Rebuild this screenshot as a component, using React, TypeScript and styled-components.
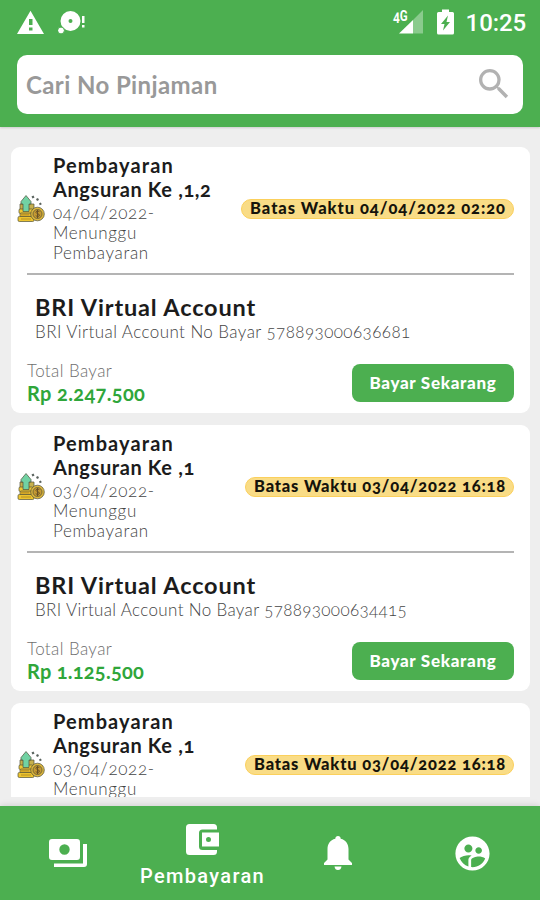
import React from 'react';
import styled, { createGlobalStyle } from 'styled-components';
import { MdSearch, MdSupervisedUserCircle } from 'react-icons/md';

const GREEN = '#4caf50';

const GlobalStyle = createGlobalStyle`
  * { box-sizing: border-box; }
  body {
    margin: 0;
    background: #eeeeee;
    font-family: "Lato", "Open Sans", sans-serif;
    font-variant-numeric: oldstyle-nums;
  }
`;

const Screen = styled.div`
  width: 540px;
  height: 900px;
  display: flex;
  flex-direction: column;
  overflow: hidden;
  background: #eeeeee;
`;

const Header = styled.header`
  height: 127px;
  flex: none;
  background: ${GREEN};
  box-shadow: 0 1px 2px rgba(0, 0, 0, 0.14);
`;

const StatusBar = styled.div`
  height: 55px;
  padding: 0 14px 11px 17px;
  display: flex;
  align-items: center;
  color: #fff;
`;

const DiscIcon = styled.svg`
  margin-left: 14px;
`;

const StatusRight = styled.div`
  margin-left: auto;
  display: flex;
  align-items: center;
`;

const Battery = styled.svg`
  margin: 0 12px 0 14px;
`;

const Clock = styled.span`
  font: 500 24px/28px "Roboto", sans-serif;
  letter-spacing: -0.1px;
  font-variant-numeric: lining-nums;
  margin-top: 2px;
`;

const SearchBox = styled.div`
  height: 59px;
  margin: 0 17px;
  padding: 0 12px 1px 9px;
  display: flex;
  align-items: center;
  justify-content: space-between;
  border-radius: 10px;
  background: #fff;
  color: #999;
  font-size: 24px;
  font-weight: 700;
  letter-spacing: 0.4px;
`;

const SearchIcon = styled(MdSearch)`
  width: 40px;
  height: 40px;
  margin-right: -3px;
  color: #b2b2b2;
`;

const List = styled.main`
  height: 670px;
  flex: none;
  padding: 20px 10px 0 11px;
  display: flex;
  flex-direction: column;
  gap: 12px;
  overflow: hidden;
`;

const Card = styled.section`
  height: 266px;
  flex: none;
  padding: 6px 16px 0;
  border-radius: 9px;
  background: #fff;
`;

const CardTop = styled.div`
  height: 120px;
  margin-left: -10px;
  display: flex;
  align-items: center;
`;

const MoneyArt = styled.svg`
  flex: none;
  margin: 0 8px 9px 0;
`;

const Summary = styled.div`
  width: 170px;
  height: 120px;
`;

const Title = styled.h2`
  margin: 0;
  font-size: 20px;
  line-height: 24px;
  font-weight: 700;
  letter-spacing: 0.6px;
  color: #1c1c1c;
`;

const TitleLead = styled.span`
  display: block;
  letter-spacing: 1.1px;
`;

const Status = styled.div`
  margin-top: 2px;
  width: 120px;
  font-size: 17px;
  line-height: 20px;
  font-weight: 300;
  letter-spacing: 0.65px;
  color: #444;
`;

const Deadline = styled.div<{ $tracking: number }>`
  height: 20px;
  margin: -8px 0 0 auto;
  padding: 0 7px 0 8px;
  border: 1px solid #fbd05c;
  border-radius: 10px;
  background: #f9dc86;
  font-size: 16.5px;
  line-height: 16px;
  font-weight: 900;
  letter-spacing: ${p => p.$tracking}px;
  white-space: nowrap;
  color: #15130b;
`;

const Divider = styled.hr`
  height: 2px;
  margin: 0;
  border: 0;
  background: #b4b4b4;
`;

const Account = styled.div`
  padding: 18px 0 0 8px;
`;

const AccountName = styled.h3`
  margin: 0;
  font-size: 23.5px;
  line-height: 28px;
  font-weight: 700;
  letter-spacing: 0.85px;
  color: #1c1c1c;
`;

const AccountNumber = styled.div<{ $tracking: number }>`
  font-size: 17px;
  line-height: 22px;
  font-weight: 300;
  letter-spacing: ${p => p.$tracking}px;
  white-space: nowrap;
  color: #444;
`;

const PayRow = styled.div`
  margin-top: 21px;
  display: flex;
  justify-content: space-between;
`;

const TotalLabel = styled.div`
  margin-top: -3px;
  font-size: 17px;
  line-height: 20px;
  font-weight: 300;
  letter-spacing: 0.4px;
  color: #6e6e6e;
`;

const Amount = styled.div<{ $tracking: number }>`
  font-size: 20px;
  line-height: 24px;
  font-weight: 700;
  letter-spacing: ${p => p.$tracking}px;
  color: #2fa63a;
`;

const PayButton = styled.button`
  width: 162px;
  height: 38px;
  padding: 0 0 1px;
  border: 0;
  border-radius: 8px;
  background: ${GREEN};
  color: #fff;
  font: 900 17px "Lato", sans-serif;
  letter-spacing: 0.7px;
  white-space: nowrap;
`;

const BottomNav = styled.nav`
  height: 94px;
  margin-top: auto;
  display: grid;
  grid-template-columns: repeat(4, 1fr);
  background: ${GREEN};
  box-shadow: 0 -1px 6px rgba(0, 0, 0, 0.12);
  color: #fff;
`;

const Tab = styled.div`
  display: flex;
  flex-direction: column;
  align-items: center;
  justify-content: center;
`;

const WalletTab = styled(Tab)`
  justify-content: flex-start;
  padding-top: 18px;
`;

const TabLabel = styled.span`
  margin-top: 9px;
  font: 500 20px/24px "Roboto", sans-serif;
  letter-spacing: 1.35px;
`;

function MoneyIcon() {
  return (
    <MoneyArt width="28" height="30" viewBox="0 0 28 30">
      <g stroke="#50513b" strokeWidth="0.7" strokeLinejoin="round">
        <path fill="#c6b04c" d="M3 10h14v6H3z" />
        <rect x="2" y="15" width="14" height="4.5" rx="1.2" fill="#f0c832" />
        <rect x="3" y="19" width="14" height="4" rx="1.2" fill="#e2b52d" />
        <rect x="1" y="22.5" width="16" height="5" rx="1.3" fill="#edc42f" />
        <path fill="#71d2a3" d="M9 1.500L14 7.500v2.500H12v7.500H6V10H4V7.500z" />
        <circle cx="20.500" cy="20" r="6.800" fill="#dcb53c" />
        <circle cx="20.500" cy="20" r="4.500" fill="#c69a32" />
      </g>
      <path d="M22.500 18c-1-1.400-4-1-3.500.6.500 1.500 3.500 1 3.500 2.600 0 1.500-3 1.500-3.800.3M20.500 16v8" fill="none" stroke="#695126" />
      <path d="M4 20.800h8M4 25h10" stroke="#a98520" strokeWidth="0.8" />
      <path d="M14.500 2.500l2-1 1 2-2 1zM19 5l2-1 1 2-2 1zM22 9.500l1.800-1 1 1.800-2 1z" fill="#59625d" />
    </MoneyArt>
  );
}

interface Payment {
  installment: string;
  date: string;
  deadline: string;
  deadlineTracking: number;
  account: string;
  accountTracking: number;
  total: string;
  totalTracking: number;
}

function PaymentCard({ payment }: { payment: Payment }) {
  return (
    <Card>
      <CardTop>
        <MoneyIcon />
        <Summary>
          <Title><TitleLead>Pembayaran</TitleLead>Angsuran Ke {payment.installment}</Title>
          <Status>{payment.date}-<br />Menunggu<br />Pembayaran</Status>
        </Summary>
        <Deadline $tracking={payment.deadlineTracking}>Batas Waktu {payment.deadline}</Deadline>
      </CardTop>
      <Divider />
      <Account>
        <AccountName>BRI Virtual Account</AccountName>
        <AccountNumber $tracking={payment.accountTracking}>BRI Virtual Account No Bayar {payment.account}</AccountNumber>
      </Account>
      <PayRow>
        <div>
          <TotalLabel>Total Bayar</TotalLabel>
          <Amount $tracking={payment.totalTracking}>Rp {payment.total}</Amount>
        </div>
        <PayButton>Bayar Sekarang</PayButton>
      </PayRow>
    </Card>
  );
}

const first: Payment = {
  installment: ',1,2', date: '04/04/2022', deadline: '04/04/2022 02:20', deadlineTracking: 0.96,
  account: '578893000636681', accountTracking: 0.43, total: '2.247.500', totalTracking: 0.35,
};

const second: Payment = {
  installment: ',1', date: '03/04/2022', deadline: '03/04/2022 16:18', deadlineTracking: 0.82,
  account: '578893000634415', accountTracking: 0.35, total: '1.125.500', totalTracking: 0.25,
};

const payments = [first, second, second];

export default function App() {
  return (
    <Screen>
      <GlobalStyle />
      <Header>
        <StatusBar>
          <svg width="27" height="25" viewBox="0 0 27 25" fill="#fff">
            <path fillRule="evenodd" d="M13.500 .8L27 24H0zM12 9v6h3.500V9zM12 17.500v3h3.500v-3z" />
          </svg>
          <DiscIcon width="27" height="26" viewBox="0 0 27 26" fill="#fff">
            <path fillRule="evenodd" d="M12.500 2a10 10 0 1 1 0 20 10 10 0 0 1 0-20zm0 8a2 2 0 1 0 0 4 2 2 0 0 0 0-4z" />
            <circle cx="3" cy="21.500" r="3.400" stroke={GREEN} strokeWidth="1" />
            <path d="M24 7h2.500v7H24zM24 16h2.500v2.500H24z" />
          </DiscIcon>
          <StatusRight>
            <svg width="31" height="26" viewBox="0 0 31 26">
              <path fill="#fff" fillOpacity="0.35" d="M31 1v23.500H21V11z" />
              <path fill="#fff" d="M21 11v13.500H7z" />
              <text x="1" y="11.500" fill="#fff" fontFamily="Roboto, sans-serif" fontSize="14" fontWeight="700" fontVariantNumeric="lining-nums" textLength="14.5" lengthAdjust="spacingAndGlyphs">4G</text>
            </svg>
            <Battery width="17" height="26" viewBox="0 0 17 26">
              <path fill="#fff" fillRule="evenodd" d="M5 .5h7V3h3.500q1.500 0 1.500 1.500v19.500q0 1.500-1.500 1.500h-14Q0 25.500 0 24V4.500Q0 3 1.500 3H5zM11 6.500l-7 8.500h3.500L6 21.500l7-8.500H9.500z" />
            </Battery>
            <Clock>10:25</Clock>
          </StatusRight>
        </StatusBar>
        <SearchBox>
          <span>Cari No Pinjaman</span>
          <SearchIcon />
        </SearchBox>
      </Header>
      <List>
        {payments.map((payment, index) => <PaymentCard key={index} payment={payment} />)}
      </List>
      <BottomNav>
        <Tab>
          <svg width="38" height="28" viewBox="0 0 38 28" fill="#fff">
            <path fillRule="evenodd" d="M3 0h25q3 0 3 3v15q0 3-3 3H3q-3 0-3-3V3q0-3 3-3zm12.500 5.300a5.200 5.200 0 1 0 0 10.400 5.200 5.200 0 0 0 0-10.400z" />
            <path d="M34 5h4v20q0 3-3 3H5v-3.600h29z" />
          </svg>
        </Tab>
        <WalletTab>
          <svg width="33" height="31" viewBox="0 0 33 31" fill="#fff">
            <path d="M3.500 0H27.500Q31 0 31 3.500V5.500H16.500Q13 5.500 13 9V22.500Q13 26 16.500 26H31V27.500Q31 31 27.500 31H3.500Q0 31 0 27.500V3.500Q0 0 3.500 0z" />
            <path fillRule="evenodd" d="M16 8.500H33V22.500H16zM22.500 13a2.500 2.500 0 1 0 0 5 2.500 2.500 0 0 0 0-5z" />
          </svg>
          <TabLabel>Pembayaran</TabLabel>
        </WalletTab>
        <Tab>
          <svg width="28" height="34" viewBox="0 0 28 34" fill="#fff">
            <path d="M14 0q2.500 0 2.700 2.700C22 4 24.500 8 24.500 13v10.500L28 27v2H0v-2l3.500-3.500V13C3.500 8 6 4 11.300 2.700Q11.500 0 14 0zM10.500 30.500h7q-.5 3.500-3.500 3.500t-3.500-3.500z" />
          </svg>
        </Tab>
        <Tab>
          <MdSupervisedUserCircle size={41} />
        </Tab>
      </BottomNav>
    </Screen>
  );
}
